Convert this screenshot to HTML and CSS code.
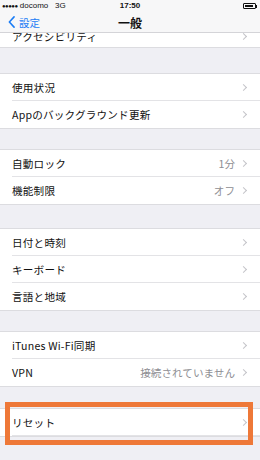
FILE: index.html
```html
<!DOCTYPE html>
<html lang="ja">
<head>
<meta charset="utf-8">
<link rel="stylesheet" href="styles.css">
</head>
<body>
<div class="screen">
  <div class="top">
    <div class="status">
      <div class="carrier"><span class="dots">●●●●●</span> docomo&nbsp;&nbsp;&nbsp;3G</div>
      <div class="time">17:50</div>
      <div class="battery"><span class="bat-body"><span class="bat-fill"></span></span><span class="bat-tip"></span></div>
    </div>
    <div class="nav">
      <div class="back">
        <svg class="back-icon" viewBox="0 0 8 14" width="7" height="12"><path d="M7 1 L1.5 7 L7 13" fill="none" stroke="#1a7cf5" stroke-width="1.8" stroke-linecap="round" stroke-linejoin="round"/></svg>
        <span>設定</span>
      </div>
      <div class="title">一般</div>
    </div>
  </div>

  <div class="list">
    <div class="group partial">
      <div class="row cut"><span class="label">アクセシビリティ</span><span class="chev"></span></div>
    </div>
    <div class="gap g1"></div>
    <div class="group">
      <div class="row"><span class="label">使用状況</span><span class="chev"></span></div>
      <div class="row"><span class="label">Appのバックグラウンド更新</span><span class="chev"></span></div>
    </div>
    <div class="gap g2"></div>
    <div class="group">
      <div class="row"><span class="label">自動ロック</span><span class="value">1分</span><span class="chev"></span></div>
      <div class="row"><span class="label">機能制限</span><span class="value">オフ</span><span class="chev"></span></div>
    </div>
    <div class="gap g3"></div>
    <div class="group">
      <div class="row"><span class="label">日付と時刻</span><span class="chev"></span></div>
      <div class="row"><span class="label">キーボード</span><span class="chev"></span></div>
      <div class="row"><span class="label">言語と地域</span><span class="chev"></span></div>
    </div>
    <div class="gap g4"></div>
    <div class="group">
      <div class="row"><span class="label">iTunes Wi-Fi同期</span><span class="chev"></span></div>
      <div class="row"><span class="label">VPN</span><span class="value">接続されていません</span><span class="chev"></span></div>
    </div>
    <div class="gap g5"></div>
    <div class="group highlighted">
      <div class="row"><span class="label">リセット</span><span class="chev"></span></div>
      <div class="mark"></div>
    </div>
  </div>
</div>
</body>
</html>
```

FILE: styles.css
```css
* { box-sizing: border-box; margin: 0; padding: 0; }
html, body { width: 260px; height: 460px; overflow: hidden; }
body {
  background: #efeff4;
  font-family: "Noto Sans CJK JP", "Noto Sans", "Liberation Sans", sans-serif;
  color: #111;
}
.screen { width: 260px; height: 460px; display: flex; flex-direction: column; overflow: hidden; }

.top { background: #f7f7f8; border-bottom: 1px solid #d4d4d8; flex: none; position: relative; z-index: 1; }
.status {
  height: 12px;
  display: flex;
  align-items: center;
  justify-content: space-between;
  padding: 0 3px 0 2px;
  font-size: 8px;
  line-height: 1;
  position: relative;
}
.carrier { font-family: "Liberation Sans", sans-serif; letter-spacing: 0; }
.dots { font-size: 6px; letter-spacing: -0.5px; }
.time { position: absolute; left: 0; right: 0; text-align: center; font-family: "Liberation Sans", sans-serif; font-weight: bold; font-size: 8px; }
.battery { display: flex; align-items: center; }
.bat-body { width: 13px; height: 6px; border: 1px solid #111; border-radius: 1px; padding: 1px; display: flex; }
.bat-fill { width: 8px; background: #111; }
.bat-tip { width: 1px; height: 3px; background: #111; }

.nav {
  height: 20px;
  display: flex;
  align-items: center;
  position: relative;
}
.back { display: flex; align-items: center; gap: 4px; padding-left: 8px; color: #1a7cf5; font-size: 10.5px; }
.title { position: absolute; left: 0; right: 0; text-align: center; font-weight: bold; font-size: 12px; pointer-events: none; }

.list { flex: 1; display: flex; flex-direction: column; }
.group { background: #fff; border-top: 1px solid #dcdce0; border-bottom: 1px solid #dcdce0; position: relative; }
.group.partial { border-top: none; height: 15px; overflow: hidden; }
.row {
  height: 27px;
  display: flex;
  align-items: center;
  margin-left: 12px;
  padding-right: 13px;
  font-size: 10.6px;
  border-bottom: 1px solid #e3e3e6;
}
.row:last-child { border-bottom: none; }
.row.cut { margin-top: -10px; }
.label { flex: 1; white-space: nowrap; letter-spacing: 0.2px; }
.value { color: #8e8e93; margin-right: 6px; font-size: 10.6px; }
.chev {
  width: 5px; height: 5px;
  border-top: 1px solid #c4c4c9;
  border-right: 1px solid #c4c4c9;
  transform: rotate(45deg);
  margin-right: 1px;
}

.gap { flex: none; }
.g1 { height: 25px; }
.g2 { height: 20px; }
.g3 { height: 23px; }
.g4 { height: 20px; }
.g5 { height: 21px; }

.mark {
  position: absolute;
  left: 5px; right: 7px; top: -7px; bottom: -9px;
  border: 5px solid #ee7838;
}
```
